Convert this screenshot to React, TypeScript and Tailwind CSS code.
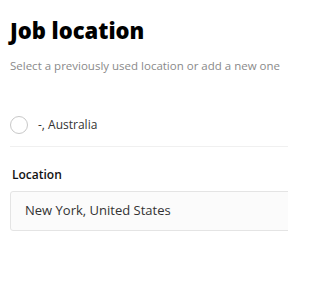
export default function App() {
  return (
    <div className="h-[288px] w-[288px] overflow-hidden bg-white font-['Open_Sans',sans-serif]">
      <div className="w-[320px] pl-[10px] pt-[16px]">
        <h1 className="font-['Noto_Sans',sans-serif] text-[22px] font-black leading-[28px] text-black">
          Job location
        </h1>
        <p className="mt-[14px] whitespace-nowrap text-[11.5px] leading-[16px] text-[#8a8a8a]">
          Select a previously used location or add a new one
        </p>

        <label className="mt-[42px] flex items-center gap-[10px]">
          <span className="h-[18px] w-[18px] rounded-full border border-[#c8c8c8] bg-white" />
          <span className="text-[12px] text-[#333]">-, Australia</span>
        </label>
        <div className="mt-[12px] h-px bg-[#f0f0f0]" />

        <div className="mt-[20px] pl-[2px] text-[12px] font-semibold leading-[16px] text-[#111]">Location</div>
        <div className="mt-[8px] flex h-[40px] items-center rounded-[3px] border border-[#e4e4e4] bg-[#fbfbfb] pl-[14px] text-[13px] text-[#333]">
          New York, United States
        </div>
      </div>
    </div>
  );
}
